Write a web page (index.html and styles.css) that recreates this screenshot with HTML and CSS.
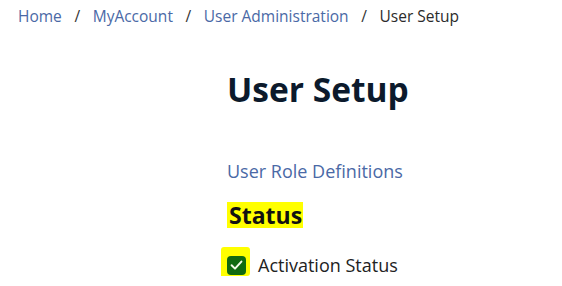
FILE: index.html
```html
<!DOCTYPE html>
<html lang="en">
<head>
<meta charset="utf-8">
<title>User Setup</title>
<link rel="stylesheet" href="styles.css">
</head>
<body>
<nav class="breadcrumb">
  <a href="#" class="crumb-link">Home</a>
  <span class="sep">/</span>
  <a href="#" class="crumb-link">MyAccount</a>
  <span class="sep">/</span>
  <a href="#" class="crumb-link">User Administration</a>
  <span class="sep">/</span>
  <span class="crumb-current">User Setup</span>
</nav>
<main class="content">
  <h1 class="title">User Setup</h1>
  <a href="#" class="role-link">User Role Definitions</a>
  <h2 class="section"><span class="mark">Status</span></h2>
  <label class="check-row">
    <span class="check-hl">
      <span class="checkbox">
        <svg viewBox="0 0 19 19" width="19" height="19"><path d="M4.6 9.3 L8 12.6 L14.4 5.6" fill="none" stroke="#f4fbe8" stroke-width="2" stroke-linecap="round" stroke-linejoin="round"/></svg>
      </span>
    </span>
    <span class="check-label">Activation Status</span>
  </label>
</main>
</body>
</html>
```
FILE: styles.css
```css
html, body {
  margin: 0;
  padding: 0;
  background: #fff;
}
body {
  font-family: "Open Sans", "Noto Sans", sans-serif;
  color: #222;
}
.breadcrumb {
  display: flex;
  align-items: baseline;
  padding: 4px 0 0 18px;
  font-size: 15.5px;
  line-height: 24px;
}
.crumb-link {
  color: #4a69a6;
  text-decoration: none;
}
.sep {
  color: #333;
  padding: 0 12.6px;
}
.crumb-current {
  color: #2b2b2b;
}
.content {
  display: flex;
  flex-direction: column;
  align-items: flex-start;
  padding-left: 227px;
}
.title {
  margin: 38px 0 0 0;
  font-size: 33.5px;
  line-height: 46px;
  font-weight: 700;
  color: #0c1a2c;
}
.role-link {
  margin-top: 46px;
  font-size: 18px;
  line-height: 26px;
  color: #4a69a6;
  text-decoration: none;
}
.section {
  margin: 18px 0 0 0;
  font-size: 23px;
  line-height: 26px;
  font-weight: 700;
  color: #111;
}
.mark {
  display: inline-block;
  line-height: 26px;
  background: #ffff00;
  padding: 0 1px 0 2px;
}
.check-row {
  display: flex;
  align-items: flex-end;
  margin-top: 19px;
  gap: 8px;
  font-size: 18px;
  color: #222;
}
.check-hl {
  position: relative;
  display: flex;
  align-items: flex-end;
  box-sizing: border-box;
  width: 29px;
  height: 29px;
  margin-left: -6px;
  padding: 0 0 1px 6px;
  background: #ffff00;
  border-radius: 3px;
}
.check-hl::after {
  content: "";
  position: absolute;
  left: 0;
  top: 26px;
  width: 14px;
  height: 12px;
  background: #ffff00;
  border-radius: 0 0 3px 3px;
}
.checkbox {
  position: relative;
  z-index: 1;
  display: flex;
  width: 19px;
  height: 19px;
  background: #116a10;
  border-radius: 4px;
}
.check-label {
  line-height: 22px;
}
```
